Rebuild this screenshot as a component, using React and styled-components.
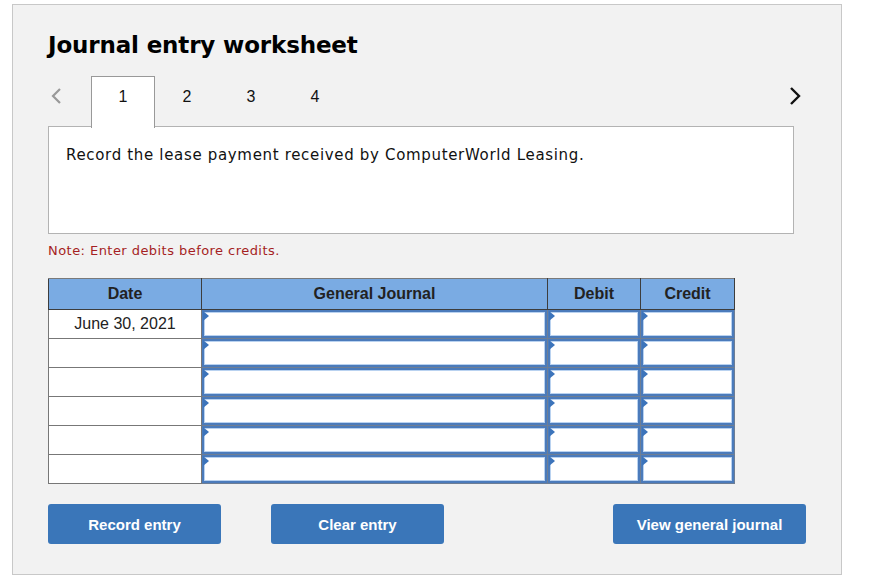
import React from 'react';
import styled, { createGlobalStyle } from 'styled-components';

const GlobalStyle = createGlobalStyle`
  body {
    margin: 0;
    background: #fff;
    font-family: 'Liberation Sans', Arial, sans-serif;
  }
`;

const rows = ['June 30, 2021', '', '', '', '', ''];

const App = () => {
  return (
    <>
      <GlobalStyle />
      <Page>
        <Panel>
          <Title>Journal entry worksheet</Title>
          <TabBar>
            <Arrow $muted>
              <svg width="14" height="18" viewBox="0 0 14 18">
                <path d="M11 2 L4 9 L11 16" fill="none" stroke="currentColor" strokeWidth="2.2" />
              </svg>
            </Arrow>
            <Tabs>
              {[1, 2, 3, 4].map((n) => (
                <Tab key={n} $active={n === 1}>{n}</Tab>
              ))}
            </Tabs>
            <Arrow>
              <svg width="14" height="20" viewBox="0 0 14 20">
                <path d="M3 2 L11 10 L3 18" fill="none" stroke="currentColor" strokeWidth="2.4" />
              </svg>
            </Arrow>
          </TabBar>
          <Question>Record the lease payment received by ComputerWorld Leasing.</Question>
          <Note>Note: Enter debits before credits.</Note>
          <Table>
            <thead>
              <tr>
                <Th style={{ width: 153 }}>Date</Th>
                <Th>General Journal</Th>
                <Th style={{ width: 93 }}>Debit</Th>
                <Th style={{ width: 94 }}>Credit</Th>
              </tr>
            </thead>
            <tbody>
              {rows.map((d, i) => (
                <tr key={i}>
                  <DateCell>{d}</DateCell>
                  <InputCell><Field /></InputCell>
                  <InputCell><Field /></InputCell>
                  <InputCell><Field /></InputCell>
                </tr>
              ))}
            </tbody>
          </Table>
          <Actions>
            <Button>Record entry</Button>
            <Button>Clear entry</Button>
            <Spacer />
            <Button $wide>View general journal</Button>
          </Actions>
        </Panel>
      </Page>
    </>
  );
};

export default App;

const Page = styled.div`
  padding: 4px 0 0 12px;
`;

const Panel = styled.div`
  width: 830px;
  height: 571px;
  box-sizing: border-box;
  background: #f2f2f2;
  border: 1px solid #c8c8c8;
  padding: 0 47px 0 35px;
`;

const Title = styled.h1`
  margin: 0;
  padding-top: 25px;
  font-family: 'DejaVu Sans', Verdana, sans-serif;
  font-size: 23px;
  font-weight: bold;
  letter-spacing: -0.15px;
  color: #000;
  line-height: 30px;
`;

const TabBar = styled.div`
  display: flex;
  align-items: flex-end;
  margin-top: 16px;
  height: 51px;
`;

const Arrow = styled.div`
  display: flex;
  align-items: center;
  height: 40px;
  margin-left: ${(p) => (p.$muted ? '1px' : 'auto')};
  margin-right: ${(p) => (p.$muted ? '0' : '-8px')};
  align-self: flex-start;
  color: ${(p) => (p.$muted ? '#999' : '#111')};
`;

const Tabs = styled.div`
  display: flex;
  margin-left: 28px;
  height: 100%;
`;

const Tab = styled.div`
  width: 64px;
  box-sizing: border-box;
  height: 52px;
  padding-top: 11px;
  text-align: center;
  font-size: 16px;
  color: #111;
  background: ${(p) => (p.$active ? '#fff' : 'transparent')};
  border: 1px solid ${(p) => (p.$active ? '#999' : 'transparent')};
  border-bottom: none;
  position: relative;
  z-index: 1;
`;

const Question = styled.div`
  box-sizing: border-box;
  width: 746px;
  height: 108px;
  background: #fff;
  border: 1px solid #b3b3b3;
  padding: 19px 17px;
  font-family: 'DejaVu Sans', Verdana, sans-serif;
  font-size: 15px;
  letter-spacing: 0.67px;
  color: #111;
  margin-top: -1px;
`;

const Note = styled.div`
  margin-top: 9px;
  font-family: 'DejaVu Sans', Verdana, sans-serif;
  font-size: 13px;
  letter-spacing: 0.45px;
  color: #a51f24;
`;

const Table = styled.table`
  margin-top: 20px;
  border-collapse: collapse;
  width: 687px;
  table-layout: fixed;
`;

const Th = styled.th`
  height: 31px;
  box-sizing: border-box;
  background: #7aabe3;
  border: 1px solid #3d3d3d;
  border-top-color: #7a7a7a;
  font-size: 16px;
  font-weight: bold;
  color: #222;
  padding: 0;
`;

const DateCell = styled.td`
  height: 29px;
  box-sizing: border-box;
  background: #fff;
  border: 1px solid #777;
  text-align: center;
  font-size: 16px;
  color: #222;
  padding: 0;
`;

const InputCell = styled.td`
  height: 29px;
  box-sizing: border-box;
  padding: 0;
  border: 1px solid #6e7e94;
  background: #5a7fb0;
`;

const Field = styled.div`
  position: relative;
  height: 28px;
  box-sizing: border-box;
  background: #fff;
  border: 2px solid #4b7bbb;
  box-shadow: inset 0 0 0 1px #b9d2f0;

  &::before {
    content: '';
    position: absolute;
    left: -1px;
    top: -1px;
    border-top: 5px solid transparent;
    border-bottom: 5px solid transparent;
    border-left: 6px solid #3c74bb;
  }
`;

const Actions = styled.div`
  display: flex;
  margin-top: 20px;
  margin-right: -12px;
  gap: 50px;
`;

const Spacer = styled.div`
  flex: 1;
`;

const Button = styled.button`
  width: ${(p) => (p.$wide ? '193px' : '173px')};
  height: 40px;
  border: none;
  border-radius: 3px;
  background: #3a76b9;
  color: #fff;
  font-family: 'Liberation Sans', Arial, sans-serif;
  font-size: 15px;
  font-weight: bold;
  cursor: pointer;
`;
